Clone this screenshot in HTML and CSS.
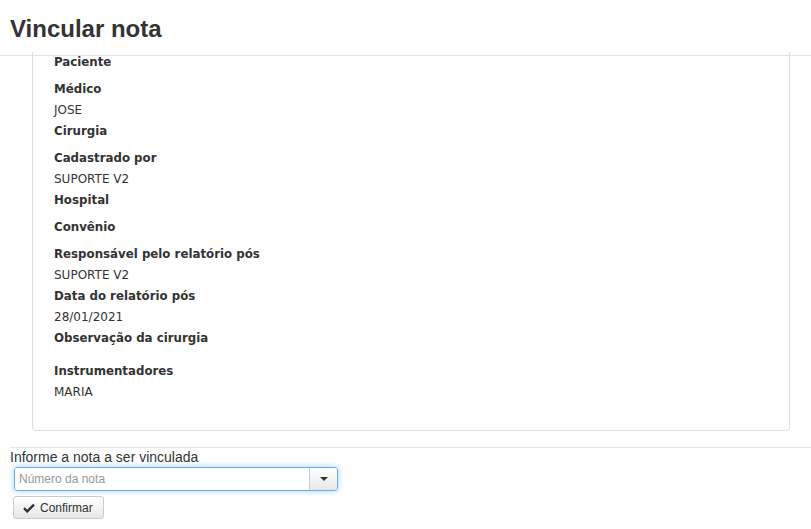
FILE: index.html
```html
<!DOCTYPE html>
<html lang="pt-BR">
<head>
<meta charset="utf-8">
<link rel="stylesheet" href="styles.css">
</head>
<body>
<header class="page-header">
  <h1 class="title">Vincular nota</h1>
</header>
<main class="content">
  <section class="panel">
    <div class="field"><div class="label">Paciente</div><div class="value empty"></div></div>
    <div class="field"><div class="label">Médico</div><div class="value">JOSE</div></div>
    <div class="field"><div class="label">Cirurgia</div><div class="value empty"></div></div>
    <div class="field"><div class="label">Cadastrado por</div><div class="value">SUPORTE V2</div></div>
    <div class="field"><div class="label">Hospital</div><div class="value empty"></div></div>
    <div class="field"><div class="label">Convênio</div><div class="value empty"></div></div>
    <div class="field"><div class="label">Responsável pelo relatório pós</div><div class="value">SUPORTE V2</div></div>
    <div class="field"><div class="label">Data do relatório pós</div><div class="value">28/01/2021</div></div>
    <div class="field"><div class="label">Observação da cirurgia</div><div class="value empty tall"></div></div>
    <div class="field"><div class="label">Instrumentadores</div><div class="value">MARIA</div></div>
  </section>
  <form class="link-form">
    <label class="form-label" for="nota">Informe a nota a ser vinculada</label>
    <div class="combo">
      <input id="nota" class="combo-input" type="text" placeholder="Número da nota">
      <button type="button" class="combo-btn"><span class="caret"></span></button>
    </div>
    <button type="button" class="btn-confirm">
      <svg class="check" width="12" height="10" viewBox="0 0 12 10"><path d="M1 5.2 L4.2 8.4 L11 1.6" fill="none" stroke="#333" stroke-width="2.4" stroke-linejoin="miter"/></svg>
      Confirmar
    </button>
  </form>
</main>
</body>
</html>
```
FILE: styles.css
```css
* { box-sizing: border-box; }
html, body { margin: 0; padding: 0; background: #fff; }
body { font-family: "Liberation Sans", Arial, sans-serif; color: #333; font-size: 14px; }

.page-header {
  height: 56px;
  border-bottom: 1px solid #e5e5e5;
  padding: 14px 10px 0;
}
.title {
  margin: 0;
  font-size: 24px;
  line-height: 30px;
  font-weight: bold;
  color: #333;
}

.content { padding: 0; }

.panel {
  margin: -4px 21px 0 32px;
  border: 1px solid #ddd;
  border-top: none;
  border-radius: 0 0 4px 4px;
  padding: 0 21px 27px 21px;
  font-family: "DejaVu Sans", Verdana, sans-serif;
}
.field { display: flex; flex-direction: column; }
.label {
  font-weight: bold;
  font-size: 11.8px;
  line-height: 21px;
  color: #333;
}
.value {
  font-size: 12px;
  line-height: 21px;
  color: #333;
}
.value.empty { height: 6px; }
.value.empty.tall { height: 12px; }

.link-form {
  margin: 16px 0 0 10px;
  border-top: 1px solid #e5e5e5;
  display: flex;
  flex-direction: column;
  align-items: flex-start;
}
.form-label {
  font-size: 14px;
  line-height: 17px;
  color: #333;
  margin-top: 1px;
}
.combo {
  margin: 1px 0 0 4px;
  display: flex;
  width: 324px;
  height: 24px;
  border: 1px solid #66afe9;
  border-radius: 3px;
  box-shadow: 0 0 6px rgba(102, 175, 233, 0.6);
}
.combo-input {
  flex: 1;
  border: none;
  outline: none;
  padding: 0 4px;
  font-family: "Liberation Sans", Arial, sans-serif;
  font-size: 12px;
  color: #555;
  border-radius: 3px 0 0 3px;
  background: #fff;
  min-width: 0;
}
.combo-input::placeholder { color: #999; }
.combo-btn {
  width: 28px;
  border: none;
  border-left: 1px solid #ccc;
  border-radius: 0 3px 3px 0;
  background: linear-gradient(#fff, #e8e8e8);
  padding: 0;
  display: flex;
  align-items: center;
  justify-content: center;
}
.caret {
  width: 0; height: 0;
  border-left: 4px solid transparent;
  border-right: 4px solid transparent;
  border-top: 4px solid #333;
}
.btn-confirm {
  margin: 5px 0 0 3px;
  width: 91px;
  height: 23px;
  border: 1px solid #ccc;
  border-radius: 3px;
  background: linear-gradient(#fff, #e6e6e6);
  font-family: "Liberation Sans", Arial, sans-serif;
  font-size: 12px;
  color: #333;
  display: flex;
  align-items: center;
  gap: 5px;
  padding: 0 0 0 9px;
}
.check { display: block; }
```
